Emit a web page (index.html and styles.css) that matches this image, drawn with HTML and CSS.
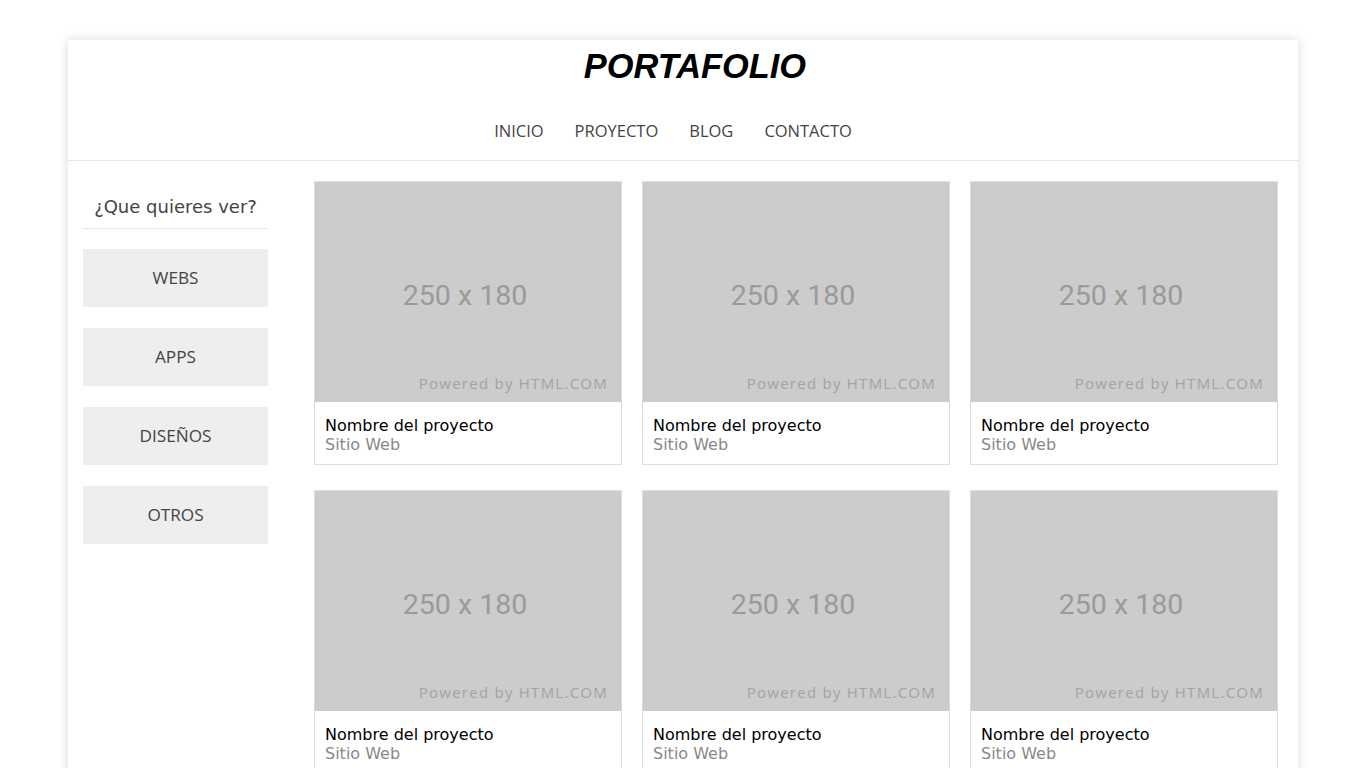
FILE: index.html
```html
<!DOCTYPE html>
<html lang="es">
<head>
<meta charset="utf-8">
<title>Portafolio</title>
<link rel="stylesheet" href="styles.css">
</head>
<body>
<div class="page">
  <header class="header">
    <h1 class="title">PORTAFOLIO</h1>
    <nav class="nav">
      <a href="#">INICIO</a>
      <a href="#">PROYECTO</a>
      <a href="#">BLOG</a>
      <a href="#">CONTACTO</a>
    </nav>
  </header>
  <div class="main">
    <aside class="sidebar">
      <h2 class="side-title">¿Que quieres ver?</h2>
      <a class="side-btn" href="#">WEBS</a>
      <a class="side-btn" href="#">APPS</a>
      <a class="side-btn" href="#">DISEÑOS</a>
      <a class="side-btn" href="#">OTROS</a>
    </aside>
    <section class="grid">
      <div class="card"><div class="thumb"><span class="dim">250 x 180</span><span class="powered">Powered by HTML.COM</span></div><div class="info"><div class="name">Nombre del proyecto</div><div class="type">Sitio Web</div></div></div>
      <div class="card"><div class="thumb"><span class="dim">250 x 180</span><span class="powered">Powered by HTML.COM</span></div><div class="info"><div class="name">Nombre del proyecto</div><div class="type">Sitio Web</div></div></div>
      <div class="card"><div class="thumb"><span class="dim">250 x 180</span><span class="powered">Powered by HTML.COM</span></div><div class="info"><div class="name">Nombre del proyecto</div><div class="type">Sitio Web</div></div></div>
      <div class="card"><div class="thumb"><span class="dim">250 x 180</span><span class="powered">Powered by HTML.COM</span></div><div class="info"><div class="name">Nombre del proyecto</div><div class="type">Sitio Web</div></div></div>
      <div class="card"><div class="thumb"><span class="dim">250 x 180</span><span class="powered">Powered by HTML.COM</span></div><div class="info"><div class="name">Nombre del proyecto</div><div class="type">Sitio Web</div></div></div>
      <div class="card"><div class="thumb"><span class="dim">250 x 180</span><span class="powered">Powered by HTML.COM</span></div><div class="info"><div class="name">Nombre del proyecto</div><div class="type">Sitio Web</div></div></div>
    </section>
  </div>
</div>
</body>
</html>
```
FILE: styles.css
```css
* { box-sizing: border-box; }
html, body { margin: 0; padding: 0; background: #fff; }
body { font-family: "DejaVu Sans", sans-serif; color: #000; }

.page {
  width: 1230px;
  margin: 40px auto 0;
  background: #fff;
  box-shadow: 0 0 10px rgba(0,0,0,0.15);
}

.header {
  border-bottom: 1px solid #e5e5e5;
  padding: 6px 0 18px;
  display: flex;
  flex-direction: column;
  align-items: center;
}
.title {
  margin: 0 0 34px 24px;
  font-family: "Liberation Sans", Arial, sans-serif;
  font-weight: bold;
  font-style: italic;
  font-size: 34.4px;
  line-height: 40px;
  color: #000;
}
.nav {
  display: flex;
  gap: 31px;
  margin-right: 20px;
}
.nav a {
  font-family: "Open Sans", sans-serif;
  font-size: 16.5px;
  line-height: 22px;
  color: #444;
  text-decoration: none;
}

.main {
  display: flex;
  padding: 20px 20px 0 15px;
  gap: 46px;
  align-items: flex-start;
}

.sidebar {
  width: 185px;
  flex: none;
  display: flex;
  flex-direction: column;
}
.side-title {
  margin: 13px 0 20px;
  padding-bottom: 8px;
  border-bottom: 1px solid #e5e5e5;
  font-family: "DejaVu Sans", sans-serif;
  font-weight: normal;
  font-size: 18px;
  line-height: 26px;
  text-align: center;
  color: #444;
}
.side-btn {
  display: flex;
  align-items: center;
  justify-content: center;
  height: 58px;
  padding-bottom: 2px;
  margin-bottom: 21px;
  background: #eee;
  font-family: "Open Sans", sans-serif;
  font-size: 17.2px;
  color: #444;
  text-decoration: none;
}

.grid {
  display: grid;
  grid-template-columns: repeat(3, 308px);
  column-gap: 20px;
  row-gap: 25px;
}
.card {
  border: 1px solid #ddd;
  background: #fff;
}
.thumb {
  position: relative;
  height: 220px;
  background: #ccc;
  display: flex;
  align-items: center;
  justify-content: center;
}
.dim {
  font-family: Roboto, sans-serif;
  font-size: 28.5px;
  color: #9a9a9a;
  margin-top: 6px;
  margin-left: -6px;
}
.powered {
  position: absolute;
  right: 13px;
  bottom: 9px;
  font-family: "Open Sans", sans-serif;
  font-size: 15px;
  letter-spacing: 1.25px;
  color: #a3a3a3;
}
.info {
  padding: 14px 11px 10px 10px;
  font-size: 16px;
  line-height: 19px;
}
.name { color: #000; }
.type { color: #888; }
```
